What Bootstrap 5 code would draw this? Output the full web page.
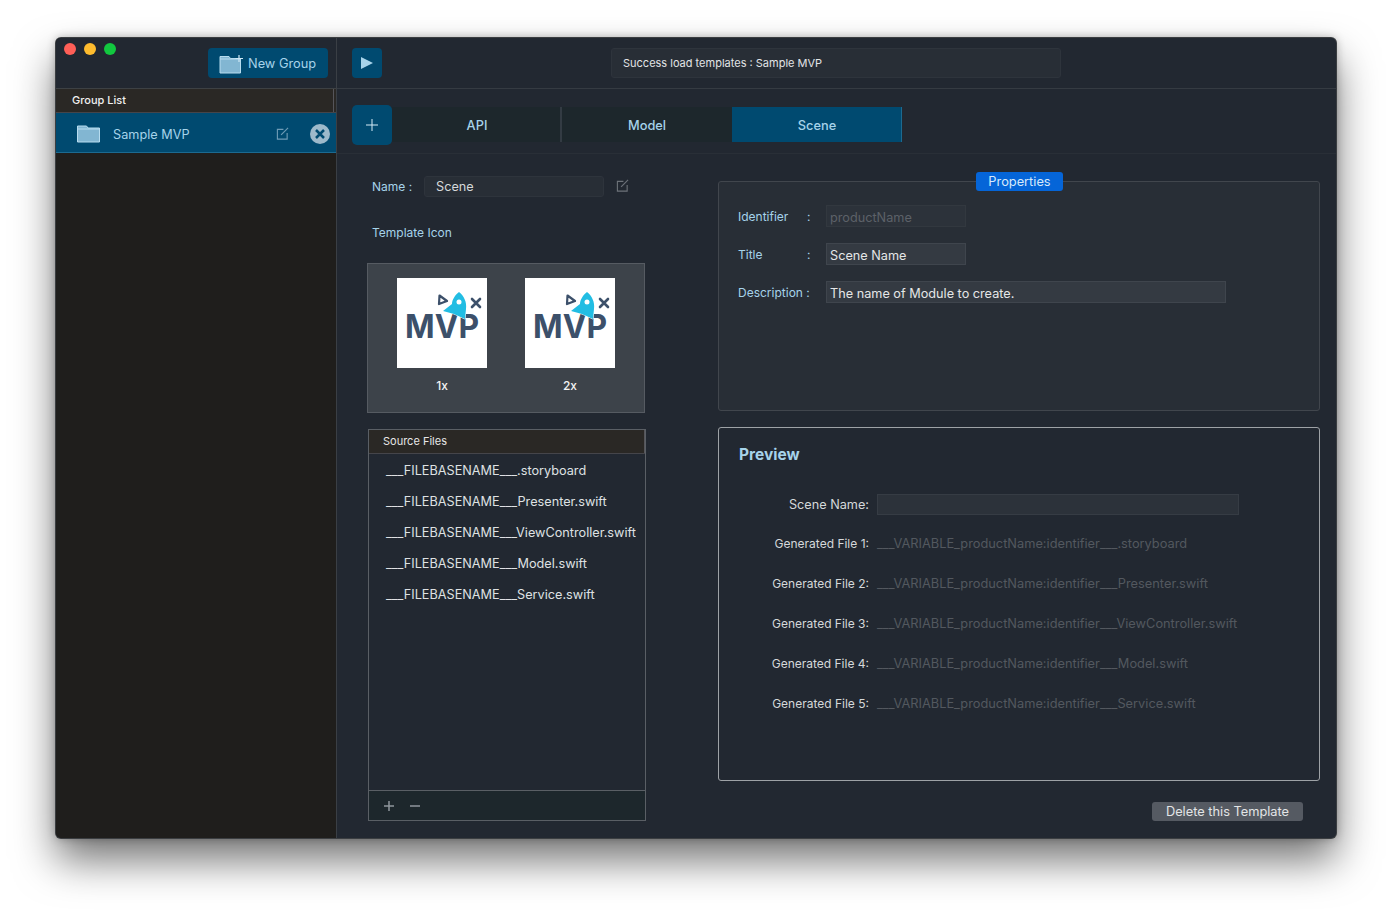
<!DOCTYPE html>
<html lang="en">
<head>
  <meta charset="UTF-8">
  <meta name="viewport" content="width=device-width, initial-scale=1.0">
  <title>Template Manager</title>
  <link href="https://cdn.jsdelivr.net/npm/bootstrap@5.3.0/dist/css/bootstrap.min.css" rel="stylesheet">
  <style>
    body {
      background: #fff;
      font-family: Inter, "Liberation Sans", sans-serif;
      padding: 38px 56px;
      min-height: 912px;
      color: #d5d8da;
      font-size: 12px;
    }
    .app-window {
      width: 1280px;
      height: 800px;
      background: #222831;
      border-radius: 5px;
      box-shadow: 0 0 0 1px #3b3e41, 0 22px 42px rgba(0,0,0,.55), 0 0 10px rgba(0,0,0,.3);
      overflow: hidden;
    }
    .side-pane { width: 281px; flex: none; background: #1f1e1c; border-right: 1px solid #3a3f45; }
    .side-head { height: 51px; background: #222831; padding: 10px 8px 0; border-bottom: 1px solid #3d4144; }
    .light { width: 12px; height: 12px; border-radius: 50%; display: block; margin-top: -5px; }
    .light-red { background: #ff5f57; }
    .light-amber { background: #febc2e; }
    .light-green { background: #12c83f; }
    .blue-btn { background: #004a70; color: #a6d3ea; border-radius: 4px; }
    .new-group { width: 120px; height: 30px; font-size: 12.8px; padding: 1px 0 0 11px; }
    .group-title { height: 24px; background: #2a2825; color: #f0f0f0; font-weight: 500; font-size: 11px; padding-left: 16px; line-height: 23px; border-bottom: 1px solid #45454a; box-shadow: inset -2px 0 #2a2825, inset -3px 0 #55555a; }
    .group-row { height: 40px; background: #004a70; color: #a6d3ea; font-size: 12.7px; padding: 2px 6px 0 21px; border-bottom: 1px solid #1c6a90; }
    .group-name { margin-left: 13px; margin-top: 2px; }
    .x-btn { width: 20px; height: 20px; margin-left: 21px; }
    .top-bar { height: 51px; padding: 10px 15px; border-bottom: 1px solid #353b42; }
    .play-btn { width: 30px; height: 30px; }
    .status-box { width: 450px; height: 30px; margin-left: 229px; background: #282e36; border: 1px solid #2e343c; border-radius: 3px; padding-left: 11px; font-size: 11px; color: #e2e4e6; }
    .tabs-row { height: 65px; padding: 16px 15px 0; border-bottom: 1px solid #292f37; }
    .tab-plus { width: 40px; height: 40px; border-radius: 5px; }
    .tab-item { width: 170px; height: 35px; margin-top: 2px; padding-top: 3px; background: #1d272c; color: #a6d3ea; font-size: 12.8px; font-weight: 500; box-shadow: inset -2px 0 #333b43; }
    .tab-plain { box-shadow: none; }
    .tab-on { background: #004a70; box-shadow: inset -1px 0 #1c6a90; }
    .left-col { width: 381px; flex: none; padding: 22px 0 0 35px; }
    .name-label { width: 52px; color: #a6d3ea; }
    .name-input { width: 180px; height: 21px; background: #282e36; border: 1px solid #2e343c; border-radius: 3px; padding-left: 11px; font-size: 12.7px; }
    .name-edit { margin: -2px 0 0 12px; }
    .icon-label { color: #a6d3ea; margin: 28px 0 23px; line-height: 15px; }
    .icon-box { width: 278px; height: 150px; margin-left: -5px; background: #3d434a; border: 1px solid #565b62; padding: 14px 29px 0; gap: 38px; }
    .icon-cell { width: 90px; color: #f3f3f3; font-weight: 500; line-height: 15px; }
    .logo-tile { width: 90px; height: 90px; background: #fff; display: block; margin-bottom: 10px; }
    .files-box { width: 278px; height: 392px; margin: 16px 0 0 -4px; border: 1px solid #5a5f65; }
    .files-head { height: 24px; background: #2a2825; font-size: 11px; line-height: 23px; padding-left: 14px; color: #e6e6e6; border-bottom: 1px solid #45454a; box-shadow: inset -1px 0 #55555a; }
    .file-line { height: 31px; padding-left: 17px; font-size: 12.7px; line-height: 31px; color: #dfe1e3; white-space: nowrap; }
    .files-list { padding-top: 1px; }
    .files-foot { height: 30px; background: #1d272c; border-top: 1px solid #5a5f65; padding-left: 14px; gap: 14px; }
    .right-col { width: 602px; flex: none; padding-top: 27px; }
    .props-box { height: 230px; background: #282e36; border: 1px solid #41464d; border-radius: 3px; padding: 23px 19px; }
    .props-tag { background: #0565d8; color: #d6e9fb; width: 87px; height: 19px; line-height: 19px; font-size: 12.8px; border-radius: 3px; top: -10px; left: 257px; }
    .prop-row { height: 22px; margin-bottom: 16px; }
    .prop-label { width: 88px; color: #a6d3ea; margin-top: 2px; }
    .prop-sep { width: 0; margin-top: 2px; margin-left: -19px; margin-right: 19px; color: #a6d3ea; }
    .prop-input { width: 140px; height: 22px; background: #343a42; border: 1px solid #3f454d; padding: 4px 0 0 3px; font-size: 12.7px; color: #e4e6e7; }
    .prop-wide { width: 400px; }
    .prop-off { background: #2c323a; border-color: #32383f; color: #5c6168; }
    .preview-box { height: 354px; margin-top: 16px; border: 1px solid #9ea2a6; border-radius: 3px; padding: 17px 20px; }
    .preview-title { color: #a6d3ea; font-size: 15.5px; font-weight: 700; line-height: 20px; margin-bottom: 29px; }
    .pv-label { width: 130px; text-align: right; flex: none; color: #d5d8da; }
    .pv-row .pv-label { margin-top: -2px; }
    .pv-value { margin-left: 8px; font-size: 12.8px; color: #53585f; margin-top: -2px; white-space: nowrap; }
    .pv-row { height: 40px; }
    .pv-first { height: 21px; margin-bottom: 10px; }
    .pv-input { width: 362px; height: 21px; margin-left: 8px; background: #2c323a; border: 1px solid #363c44; }
    .pv-name { font-size: 12.7px; }
    .delete-btn { width: 151px; height: 19px; line-height: 19px; margin: 21px 17px 0 auto; background: #555a62; color: #e3e5e6; font-size: 12.8px; border-radius: 3px; }
  </style>
</head>
<body>
  <div class="app-window d-flex">
    <div class="side-pane">
      <div class="side-head d-flex justify-content-between">
        <div class="d-flex gap-2"><span class="light light-red"></span><span class="light light-amber"></span><span class="light light-green"></span></div>
        <div class="blue-btn new-group d-flex align-items-center gap-1">
          <svg width="25" height="20" viewBox="0 0 25 20"><path d="M1 2.500h9l1.500 2h10v14.500h-20.500z" fill="#82b6d2" stroke="#b7dcef"/><path d="M1 5h20" stroke="#b7dcef"/><path d="M20 1v7M16.500 4.500h7.500" stroke="#cfe8f5" stroke-width="1.200"/></svg>
          <span>New Group</span>
        </div>
      </div>
      <div class="group-title">Group List</div>
      <div class="group-row d-flex align-items-center">
        <svg width="23" height="18" viewBox="0 0 23 18"><path d="M.5 1h9l1.500 2h11.500v14h-22z" fill="#82b6d2" stroke="#b7dcef"/><path d="M.5 4h22" stroke="#b7dcef"/></svg>
        <span class="group-name flex-grow-1">Sample MVP</span>
        <svg width="13" height="13" viewBox="0 0 14 14" fill="none" stroke="#6f9cb6" stroke-width="1.200"><path d="M8 2.500h-6.500v10.500h10.500v-6.500"/><path d="M5.500 8.500l7.500-7.500"/></svg>
        <svg class="x-btn" viewBox="0 0 20 20"><circle cx="10" cy="10" r="10" fill="#9db9ca"/><path d="M6 6l8 8M14 6l-8 8" stroke="#004a70" stroke-width="2.500"/></svg>
      </div>
    </div>
    <div class="flex-grow-1">
      <div class="top-bar d-flex">
        <div class="blue-btn play-btn d-flex align-items-center justify-content-center">
          <svg width="14" height="14" viewBox="0 0 14 14"><path d="M1 1l12 6-12 6z" fill="#a6d3ea"/></svg>
        </div>
        <div class="status-box d-flex align-items-center">Success load templates : Sample MVP</div>
      </div>
      <div class="tabs-row d-flex">
        <div class="blue-btn tab-plus d-flex align-items-center justify-content-center">
          <svg width="12" height="12" viewBox="0 0 12 12"><path d="M6 0v12M0 6h12" stroke="#d6ecf7"/></svg>
        </div>
        <div class="tab-item d-flex align-items-center justify-content-center">API</div>
        <div class="tab-item tab-plain d-flex align-items-center justify-content-center">Model</div>
        <div class="tab-item tab-on d-flex align-items-center justify-content-center">Scene</div>
      </div>
      <div class="d-flex">
        <div class="left-col">
          <div class="d-flex align-items-center">
            <span class="name-label">Name :</span>
            <div class="name-input d-flex align-items-center">Scene</div>
            <svg class="name-edit" width="13" height="13" viewBox="0 0 14 14" fill="none" stroke="#6d7279" stroke-width="1.200"><path d="M8 2.500h-6.500v10.500h10.500v-6.500"/><path d="M5.500 8.500l7.500-7.500"/></svg>
          </div>
          <div class="icon-label">Template Icon</div>
          <div class="icon-box d-flex">
            <div class="icon-cell text-center">
              <svg class="logo-tile" viewBox="0 0 90 90"><text x="8" y="60" font-family="Inter, sans-serif" font-weight="700" font-size="33" fill="#3c506a" textLength="74" lengthAdjust="spacingAndGlyphs">MVP</text><path d="M62 14C67 18 70 24 69 31L68 41 57 36 46 33 55 26C55 22 58 17 62 14z" fill="#22bde3" stroke="#fff" stroke-width="1" paint-order="stroke"/><circle cx="62" cy="24" r="2.500" fill="#fff"/><path d="M42.500 17.500L50 23l-8 3z" fill="none" stroke="#3c506a" stroke-width="2.200" stroke-linejoin="round"/><path d="M75 21l8 8M83 21l-8 8" stroke="#3c506a" stroke-width="2.600" stroke-linecap="round"/></svg>
              1x
            </div>
            <div class="icon-cell text-center">
              <svg class="logo-tile" viewBox="0 0 90 90"><text x="8" y="60" font-family="Inter, sans-serif" font-weight="700" font-size="33" fill="#3c506a" textLength="74" lengthAdjust="spacingAndGlyphs">MVP</text><path d="M62 14C67 18 70 24 69 31L68 41 57 36 46 33 55 26C55 22 58 17 62 14z" fill="#22bde3" stroke="#fff" stroke-width="1" paint-order="stroke"/><circle cx="62" cy="24" r="2.500" fill="#fff"/><path d="M42.500 17.500L50 23l-8 3z" fill="none" stroke="#3c506a" stroke-width="2.200" stroke-linejoin="round"/><path d="M75 21l8 8M83 21l-8 8" stroke="#3c506a" stroke-width="2.600" stroke-linecap="round"/></svg>
              2x
            </div>
          </div>
          <div class="files-box d-flex flex-column">
            <div class="files-head">Source Files</div>
            <div class="files-list flex-grow-1">
              <div class="file-line">___FILEBASENAME___.storyboard</div>
              <div class="file-line">___FILEBASENAME___Presenter.swift</div>
              <div class="file-line">___FILEBASENAME___ViewController.swift</div>
              <div class="file-line">___FILEBASENAME___Model.swift</div>
              <div class="file-line">___FILEBASENAME___Service.swift</div>
            </div>
            <div class="files-foot d-flex align-items-center">
              <svg width="12" height="12" viewBox="0 0 12 12"><path d="M6 1v10M1 6h10" stroke="#8f969c" stroke-width="1.500"/></svg>
              <svg width="12" height="12" viewBox="0 0 12 12"><path d="M1 6h10" stroke="#8f969c" stroke-width="1.500"/></svg>
            </div>
          </div>
        </div>
        <div class="right-col">
          <div class="props-box position-relative">
            <div class="props-tag position-absolute text-center">Properties</div>
            <div class="prop-row d-flex align-items-center">
              <span class="prop-label">Identifier</span><span class="prop-sep">:</span>
              <div class="prop-input prop-off d-flex align-items-center">productName</div>
            </div>
            <div class="prop-row d-flex align-items-center">
              <span class="prop-label">Title</span><span class="prop-sep">:</span>
              <div class="prop-input d-flex align-items-center">Scene Name</div>
            </div>
            <div class="prop-row d-flex align-items-center">
              <span class="prop-label">Description :</span>
              <div class="prop-input prop-wide d-flex align-items-center">The name of Module to create.</div>
            </div>
          </div>
          <div class="preview-box">
            <div class="preview-title">Preview</div>
            <div class="pv-first d-flex align-items-center">
              <span class="pv-label pv-name">Scene Name:</span>
              <div class="pv-input"></div>
            </div>
            <div class="pv-row d-flex align-items-center"><span class="pv-label">Generated File 1:</span><span class="pv-value">___VARIABLE_productName:identifier___.storyboard</span></div>
            <div class="pv-row d-flex align-items-center"><span class="pv-label">Generated File 2:</span><span class="pv-value">___VARIABLE_productName:identifier___Presenter.swift</span></div>
            <div class="pv-row d-flex align-items-center"><span class="pv-label">Generated File 3:</span><span class="pv-value">___VARIABLE_productName:identifier___ViewController.swift</span></div>
            <div class="pv-row d-flex align-items-center"><span class="pv-label">Generated File 4:</span><span class="pv-value">___VARIABLE_productName:identifier___Model.swift</span></div>
            <div class="pv-row d-flex align-items-center"><span class="pv-label">Generated File 5:</span><span class="pv-value">___VARIABLE_productName:identifier___Service.swift</span></div>
          </div>
          <div class="delete-btn text-center">Delete this Template</div>
        </div>
      </div>
    </div>
  </div>
  <script src="https://cdn.jsdelivr.net/npm/bootstrap@5.3.0/dist/js/bootstrap.bundle.min.js"></script>
</body>
</html>
